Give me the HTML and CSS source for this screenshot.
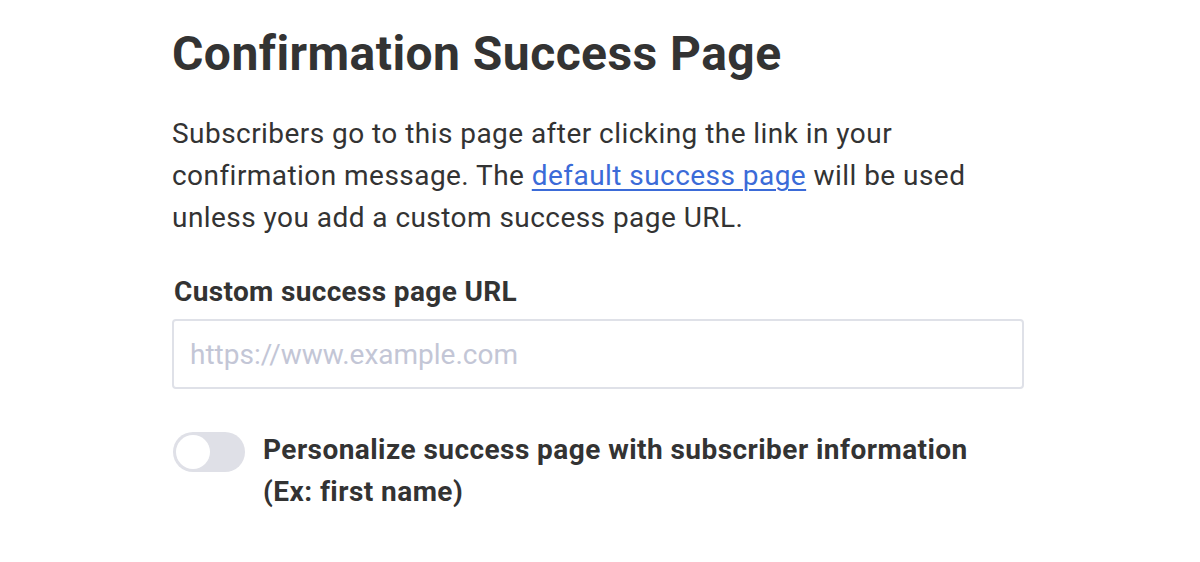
FILE: index.html
```html
<!DOCTYPE html>
<html>
<head>
<meta charset="utf-8">
<link rel="stylesheet" href="styles.css">
</head>
<body>
<main class="section">
  <h1 class="title">Confirmation Success Page</h1>
  <p class="desc">Subscribers go to this page after clicking the link in your confirmation message. The <a href="#" class="link">default success page</a> will be used unless you add a custom success page URL.</p>
  <label class="label" for="url">Custom success page URL</label>
  <input id="url" class="input" type="text" placeholder="https://www.example.com">
  <div class="toggle-row">
    <span class="toggle"><span class="knob"></span></span>
    <span class="toggle-text">Personalize success page with subscriber information (Ex: first name)</span>
  </div>
</main>
</body>
</html>
```
FILE: styles.css
```css
html, body {
  margin: 0;
  padding: 0;
  background: #ffffff;
}
body {
  font-family: Roboto, "Liberation Sans", sans-serif;
  color: #333333;
}
.section {
  width: 852px;
  padding: 26px 0 0 172px;
}
.title {
  margin: 0;
  font-size: 48px;
  font-weight: 700;
  line-height: 56px;
  letter-spacing: 0.45px;
  color: #333333;
}
.desc {
  margin: 31px 0 0;
  font-size: 28px;
  line-height: 42px;
  letter-spacing: 0.45px;
  color: #333333;
}
.link {
  color: #3b6bd8;
  text-decoration: underline;
  text-decoration-thickness: 2px;
  text-underline-offset: 4px;
}
.label {
  display: block;
  margin: 37px 0 0 2px;
  font-size: 28px;
  font-weight: 700;
  line-height: 32px;
  letter-spacing: 0.35px;
}
.input {
  display: block;
  box-sizing: border-box;
  width: 852px;
  height: 70px;
  margin-top: 11px;
  padding: 0 16px;
  border: 2px solid #dfe1e8;
  border-radius: 4px;
  font-family: Roboto, "Liberation Sans", sans-serif;
  font-size: 28px;
  letter-spacing: 0;
  color: #333;
  outline: none;
}
.input::placeholder {
  color: #c3c6d6;
}
.toggle-row {
  display: flex;
  align-items: flex-start;
  gap: 18px;
  margin-top: 43px;
}
.toggle {
  flex: none;
  width: 72px;
  height: 40px;
  margin-left: 1px;
  border-radius: 20px;
  background: #dfe0e7;
  display: flex;
  align-items: center;
  padding-left: 3px;
  box-sizing: border-box;
}
.knob {
  width: 34px;
  height: 34px;
  border-radius: 50%;
  background: #ffffff;
}
.toggle-text {
  max-width: 730px;
  margin-top: -3px;
  font-size: 28px;
  font-weight: 700;
  line-height: 42px;
  letter-spacing: 0.45px;
}
```
